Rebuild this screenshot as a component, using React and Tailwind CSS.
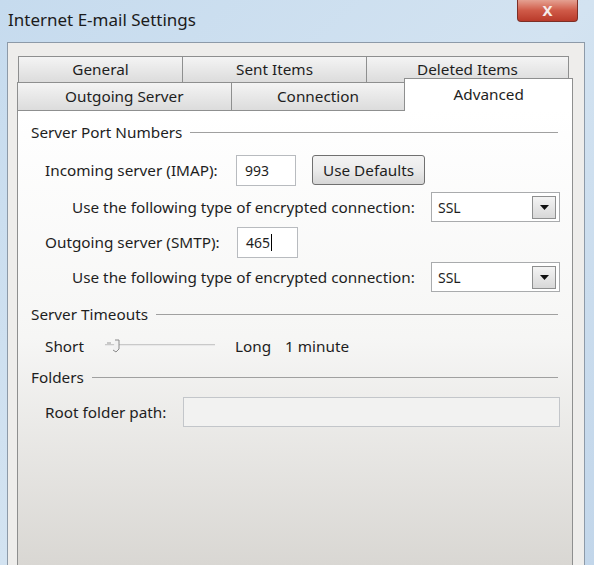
import React from "react";

const font = { fontFamily: '"Noto Sans", "Open Sans", sans-serif' };

function SectionHeader({ label }) {
  return (
    <div className="flex items-center h-[20px] pl-[13px] pr-[14px]">
      <span className="text-[15.3px] text-[#1e1e1e] leading-none">{label}</span>
      <div className="flex-1 ml-[8px] h-[2px] border-t border-[#a0a0a0] border-b-white" />
    </div>
  );
}

function SelectBox() {
  return (
    <div className="w-[129px] h-[30px] border border-[#a9abad] bg-white flex items-center justify-between pl-[6px] pr-[3px]">
      <span className="text-[14px] text-[#1e1e1e]">SSL</span>
      <div className="w-[24px] h-[23px] border border-[#8e8f8f] bg-linear-to-b from-[#f4f4f4] to-[#d8d8d8] flex items-center justify-center">
        <svg width="9" height="5" viewBox="0 0 9 5">
          <path d="M0 0 H9 L4.5 5 Z" fill="#111" />
        </svg>
      </div>
    </div>
  );
}

function Tab({ label, w, className = "" }) {
  return (
    <div
      className={`h-full flex items-center justify-center border border-[#8e8f8f] border-b-0 -ml-px first:ml-0 bg-linear-to-b from-[#f4f4f4] to-[#dcdcdc] text-[15.3px] text-[#1e1e1e] ${className}`}
      style={{ width: w }}
    >
      {label}
    </div>
  );
}

export default function App() {
  return (
    <div
      className="w-[594px] h-[565px] overflow-hidden flex flex-col bg-linear-to-br from-[#c6dbee] via-[#d3e3f1] to-[#c2d6ea]"
      style={font}
    >
      {/* Title bar */}
      <div className="h-[42px] flex items-start justify-between shrink-0">
        <div className="pl-[8px] pt-[7px] text-[17px] text-[#1b1b1b]">Internet E-mail Settings</div>
        <div className="mr-[16px] w-[61px] h-[22px] rounded-b-[4px] border border-t-0 border-[#7d2f26] bg-linear-to-b from-[#e4a091] via-[#cf5a48] to-[#b93a2a] flex items-center justify-center">
          <span className="text-[#f6ecea] text-[15px] font-bold leading-none">X</span>
        </div>
      </div>

      {/* Dialog body */}
      <div className="flex-1 ml-[7px] mr-[9px] border border-[#8d9aa8] border-b-0 bg-[#eeedeb] pl-[9px] pr-[11px] pt-[13px] flex flex-col">
        {/* Tab rows */}
        <div className="flex h-[26px] ml-px">
          <Tab label="General" w={165} />
          <Tab label="Sent Items" w={185} />
          <Tab label="Deleted Items" w={203} />
        </div>
        <div className="flex h-[28px]">
          <Tab label="Outgoing Server" w={215} />
          <Tab label="Connection" w={175} />
          <div className="relative z-10 w-[169px] h-[33px] -mt-[4px] -mb-px -ml-px border border-[#8e8f8f] border-b-0 bg-white flex justify-center pt-[4px] text-[15.3px] text-[#1e1e1e]">
            Advanced
          </div>
        </div>

        {/* Panel */}
        <div className="flex-1 border border-[#8e8f8f] border-b-0 bg-linear-to-b from-white via-[#f6f6f5] to-[#d9d7d3] flex flex-col pt-[12px] text-[15.3px] text-[#1e1e1e]">
          <SectionHeader label="Server Port Numbers" />

          {/* Incoming */}
          <div className="flex items-center h-[32px] mt-[11px] pl-[27px]">
            <span className="w-[191px]">Incoming server (IMAP):</span>
            <div className="w-[60px] h-[31px] border border-[#b8bbbf] bg-white flex items-center pl-[8px] text-[14px]">993</div>
            <div className="ml-[16px] w-[113px] h-[30px] rounded-[3px] border border-[#707070] bg-linear-to-b from-[#f3f3f3] via-[#ebebeb] to-[#d6d6d6] flex items-center justify-center text-[15.3px]">
              Use Defaults
            </div>
          </div>

          {/* Encryption 1 */}
          <div className="flex items-center h-[30px] mt-[6px] pl-[54px]">
            <span className="w-[359px]">Use the following type of encrypted connection:</span>
            <SelectBox />
          </div>

          {/* Outgoing */}
          <div className="flex items-center h-[31px] mt-[5px] pl-[27px]">
            <span className="w-[192px]">Outgoing server (SMTP):</span>
            <div className="w-[61px] h-[31px] border border-[#b8bbbf] bg-white flex items-center pl-[8px] text-[14px]">
              465<span className="inline-block w-px h-[17px] bg-black ml-px" />
            </div>
          </div>

          {/* Encryption 2 */}
          <div className="flex items-center h-[30px] mt-[4px] pl-[54px]">
            <span className="w-[359px]">Use the following type of encrypted connection:</span>
            <SelectBox />
          </div>

          <div className="mt-[13px]">
            <SectionHeader label="Server Timeouts" />
          </div>

          {/* Slider row */}
          <div className="flex items-center h-[20px] mt-[11px] pl-[27px]">
            <span className="w-[60px]">Short</span>
            <svg width="112" height="14" viewBox="0 0 112 14" className="shrink-0">
              <rect x="0" y="5" width="110" height="1" fill="#c9c9c9" />
              <rect x="0" y="6" width="110" height="1" fill="#e8e8e8" />
              <rect x="0" y="7" width="110" height="1" fill="#f4f4f4" />
              <path d="M2 4 H6" stroke="#9a9a9a" strokeWidth="1" />
              <path d="M10 1 H14 V10 L11 13 L8 11" fill="#f1f1f1" stroke="#8a8a8a" strokeWidth="1" />
            </svg>
            <span className="ml-[18px] w-[50px]">Long</span>
            <span>1 minute</span>
          </div>

          <div className="mt-[12px]">
            <SectionHeader label="Folders" />
          </div>

          {/* Root folder */}
          <div className="flex items-center h-[30px] mt-[9px] pl-[27px]">
            <span className="w-[138px]">Root folder path:</span>
            <div className="w-[377px] h-[30px] border border-[#c3c6ca] bg-[#f2f2f1]" />
          </div>
        </div>
      </div>
    </div>
  );
}
